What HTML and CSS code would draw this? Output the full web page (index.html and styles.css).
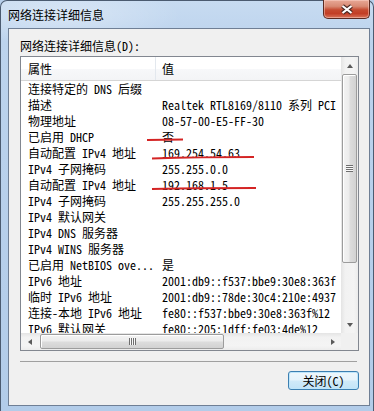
FILE: index.html
```html
<!DOCTYPE html>
<html lang="zh-CN">
<head>
<meta charset="utf-8">
<title>网络连接详细信息</title>
<link rel="stylesheet" href="styles.css">
</head>
<body>
<div class="window">
  <div class="titlebar">
    <span class="title">网络连接详细信息</span>
    <button class="close-btn" aria-label="关闭">
      <svg width="14" height="11" viewBox="0 0 14 11">
        <path d="M2.5 2 L11.5 9 M11.5 2 L2.5 9" stroke="#4a2a24" stroke-width="4.2" fill="none"/>
        <path d="M2.5 2 L11.5 9 M11.5 2 L2.5 9" stroke="#ffffff" stroke-width="2.2" fill="none"/>
      </svg>
    </button>
  </div>
  <div class="client">
    <div class="label">网络连接详细信息(D):</div>
    <div class="listbox">
      <div class="list-content">
        <div class="header"><div class="hcol1">属性</div><div class="hcol2">值</div></div>
        <div class="row"><span class="c1">连接特定的 DNS 后缀</span><span class="c2"></span></div>
        <div class="row"><span class="c1">描述</span><span class="c2">Realtek RTL8169/8110 系列 PCI</span></div>
        <div class="row"><span class="c1">物理地址</span><span class="c2">08-57-00-E5-FF-30</span></div>
        <div class="row"><span class="c1">已启用 DHCP</span><span class="c2">否</span></div>
        <div class="row"><span class="c1">自动配置 IPv4 地址</span><span class="c2">169.254.54.63</span></div>
        <div class="row"><span class="c1">IPv4 子网掩码</span><span class="c2">255.255.0.0</span></div>
        <div class="row"><span class="c1">自动配置 IPv4 地址</span><span class="c2">192.168.1.5</span></div>
        <div class="row"><span class="c1">IPv4 子网掩码</span><span class="c2">255.255.255.0</span></div>
        <div class="row"><span class="c1">IPv4 默认网关</span><span class="c2"></span></div>
        <div class="row"><span class="c1">IPv4 DNS 服务器</span><span class="c2"></span></div>
        <div class="row"><span class="c1">IPv4 WINS 服务器</span><span class="c2"></span></div>
        <div class="row"><span class="c1">已启用 NetBIOS ove...</span><span class="c2">是</span></div>
        <div class="row"><span class="c1">IPv6 地址</span><span class="c2">2001:db9::f537:bbe9:30e8:363f</span></div>
        <div class="row"><span class="c1">临时 IPv6 地址</span><span class="c2">2001:db9::78de:30c4:210e:4937</span></div>
        <div class="row"><span class="c1">连接-本地 IPv6 地址</span><span class="c2">fe80::f537:bbe9:30e8:363f%12</span></div>
        <div class="row"><span class="c1">IPv6 默认网关</span><span class="c2">fe80::205:1dff:fe03:4de%12</span></div>
      </div>
      <div class="vscroll">
        <div class="sb-btn"><span class="arrow-up"></span></div>
        <div class="vtrack">
          <div class="vthumb"><span class="vgrip"></span></div>
        </div>
        <div class="sb-btn"><span class="arrow-down"></span></div>
      </div>
      <div class="hscroll">
        <div class="sb-btn"><span class="arrow-left"></span></div>
        <div class="htrack">
          <div class="hthumb"><span class="hgrip"></span></div>
        </div>
        <div class="sb-btn"><span class="arrow-right"></span></div>
      </div>
      <div class="corner"></div>
    </div>
    <div class="separator"></div>
    <div class="footer">
      <button class="btn">关闭(C)</button>
    </div>
  </div>
</div>
<svg class="marks" width="374" height="411" viewBox="0 0 374 411">
  <path d="M147 140 L183 139.5" stroke="#d42424" stroke-width="2" fill="none"/>
  <path d="M152 158.5 Q200 157 254 157" stroke="#d42424" stroke-width="2" fill="none"/>
  <path d="M152 189 Q200 188 256 188" stroke="#d42424" stroke-width="2" fill="none"/>
</svg>
</body>
</html>
```
FILE: styles.css
```css
* { box-sizing: border-box; }
html, body { margin: 0; padding: 0; }
body {
  position: relative;
  width: 374px;
  height: 411px;
  overflow: hidden;
  background: #b7cfeb;
  font-family: "Noto Sans Mono CJK SC", "Liberation Mono", "Noto Sans CJK SC", monospace;
  font-size: 12px;
  color: #000;
}
.window {
  width: 374px;
  height: 411px;
  border: 1px solid #4b5b70;
  border-bottom: none;
  border-radius: 7px 7px 0 0;
  background:
    radial-gradient(ellipse 120px 30px at 60px 14px, rgba(255,255,255,0.35), rgba(255,255,255,0) 100%),
    linear-gradient(180deg, #c7dbf1 0%, #bcd3ed 40px, #b2cce9 100%);
  display: flex;
  flex-direction: column;
  padding: 0 3px 5px 7px;
}
.titlebar {
  height: 27px;
  display: flex;
  justify-content: space-between;
  align-items: flex-start;
  flex: none;
}
.title {
  font-family: "Noto Sans CJK SC", sans-serif;
  font-size: 12px;
  line-height: 16px;
  margin-top: 6px;
  color: #000;
}
.close-btn {
  margin-top: -1px;
  width: 47px;
  height: 19px;
  padding: 0;
  border: 1px solid #5a2a22;
  border-top: none;
  border-radius: 0 0 5px 5px;
  background: linear-gradient(180deg, #e8a896 0%, #d88a74 35%, #c54a30 55%, #c23e26 75%, #d8735a 100%);
  box-shadow: inset 0 0 0 1px rgba(255,220,210,0.45);
  display: flex;
  align-items: center;
  justify-content: center;
}
.client {
  flex: none;
  height: 378px;
  background: #f0f0f0;
  border: 1px solid #6f7f95;
  padding: 10px 10px 0 11px;
  display: flex;
  flex-direction: column;
}
.label {
  line-height: 14px;
  height: 14px;
  white-space: nowrap;
}
.listbox {
  margin-top: 3px;
  height: 295px;
  border: 1px solid #828790;
  background: #fff;
  display: grid;
  grid-template-columns: 1fr 17px;
  grid-template-rows: 1fr 17px;
}
.list-content {
  grid-area: 1 / 1;
  overflow: hidden;
  min-width: 0;
}
.header {
  display: flex;
  height: 24px;
  line-height: 23px;
  background: linear-gradient(180deg, #ffffff 0%, #ffffff 50%, #f7f8fa 50%, #f3f4f6 100%);
  border-bottom: 1px solid #d5d5d5;
}
.hcol1 {
  width: 135px;
  padding-left: 7px;
  border-right: 1px solid #e3e8ee;
  flex: none;
}
.hcol2 {
  padding-left: 6px;
}
.row {
  display: flex;
  height: 16px;
  line-height: 16px;
  white-space: nowrap;
}
.c1 {
  width: 135px;
  padding-left: 7px;
  overflow: hidden;
  flex: none;
}
.c2 {
  padding-left: 6px;
}
.vscroll {
  grid-area: 1 / 2;
  display: flex;
  flex-direction: column;
  background: linear-gradient(90deg, #e4e4e4 0%, #f2f2f2 25%, #f4f4f4 75%, #ececec 100%);
}
.hscroll {
  grid-area: 2 / 1;
  display: flex;
  background: linear-gradient(180deg, #e4e4e4 0%, #f2f2f2 25%, #f4f4f4 75%, #ececec 100%);
}
.corner {
  grid-area: 2 / 2;
  background: #f0f0f0;
}
.sb-btn {
  width: 17px;
  height: 17px;
  flex: none;
  display: flex;
  align-items: center;
  justify-content: center;
}
.arrow-up, .arrow-down, .arrow-left, .arrow-right {
  width: 0; height: 0;
  border-style: solid;
  border-color: transparent;
}
.arrow-up { border-width: 0 3.5px 4px 3.5px; border-bottom-color: #5a5a5a; }
.arrow-down { border-width: 4px 3.5px 0 3.5px; border-top-color: #5a5a5a; }
.arrow-left { border-width: 3.5px 4px 3.5px 0; border-right-color: #5a5a5a; }
.arrow-right { border-width: 3.5px 0 3.5px 4px; border-left-color: #5a5a5a; }
.vtrack {
  flex: 1;
  display: flex;
  flex-direction: column;
  padding: 0 1px;
}
.vthumb {
  height: 189px;
  border: 1px solid #9c9c9c;
  border-radius: 2px;
  background: linear-gradient(90deg, #f3f3f3 0%, #ececec 45%, #dcdcdc 55%, #d2d2d2 100%);
  box-shadow: inset 1px 1px 0 #ffffff;
  display: flex;
  align-items: center;
  justify-content: center;
}
.vgrip {
  width: 7px;
  height: 7px;
  background: repeating-linear-gradient(180deg, #6e6e6e 0 1px, #f8f8f8 1px 2px);
}
.htrack {
  flex: 1;
  display: flex;
  padding: 1px 0 1px 2px;
}
.hthumb {
  width: 184px;
  border: 1px solid #9c9c9c;
  border-radius: 2px;
  background: linear-gradient(180deg, #f3f3f3 0%, #ececec 45%, #dcdcdc 55%, #d2d2d2 100%);
  box-shadow: inset 1px 1px 0 #ffffff;
  display: flex;
  align-items: center;
  justify-content: center;
}
.hgrip {
  width: 7px;
  height: 7px;
  background: repeating-linear-gradient(90deg, #6e6e6e 0 1px, #f8f8f8 1px 2px);
}
.separator {
  margin-top: 10px;
  height: 1px;
  background: #a0a0a0;
  margin-right: 2px;
}
.footer {
  display: flex;
  justify-content: flex-end;
  margin-top: 9px;
}
.btn {
  width: 71px;
  height: 19px;
  padding: 0;
  font-family: inherit;
  font-size: 12px;
  line-height: 16px;
  color: #000;
  border: 1px solid #3c7fb1;
  border-radius: 3px;
  background: linear-gradient(180deg, #eef7fc 0%, #e5f3fb 48%, #d0eaf9 52%, #c2e3f7 100%);
  box-shadow: inset 0 0 0 1px #bfe6fb;
}
.marks {
  position: absolute;
  left: 0;
  top: 0;
  pointer-events: none;
}
```
